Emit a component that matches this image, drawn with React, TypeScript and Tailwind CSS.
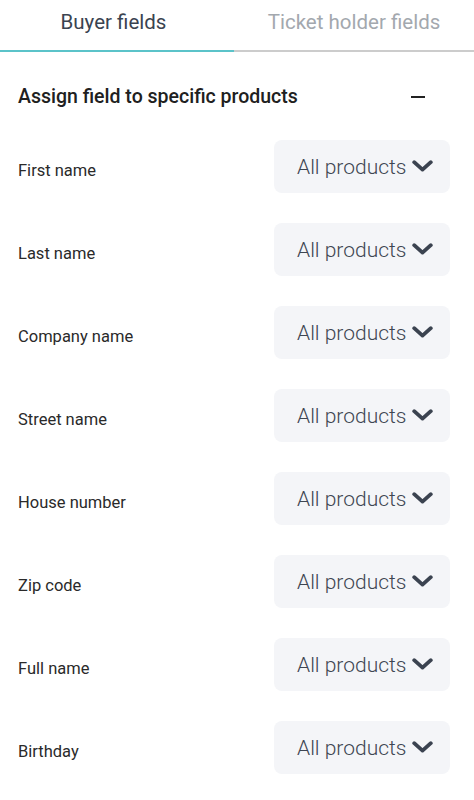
import React from "react";

const fields = [
  "First name",
  "Last name",
  "Company name",
  "Street name",
  "House number",
  "Zip code",
  "Full name",
  "Birthday",
];

function Chevron() {
  return (
    <svg width="21" height="12" viewBox="0 0 21 12" className="ml-[6px] shrink-0 self-start mt-[7px]">
      <polyline
        points="2.2,2.2 10.5,9.6 18.8,2.2"
        fill="none"
        stroke="#3b4350"
        strokeWidth="3.8"
        strokeLinecap="round"
        strokeLinejoin="round"
      />
    </svg>
  );
}

export default function App() {
  return (
    <div className="w-[474px] min-h-[800px] bg-white font-['Roboto',sans-serif]">
      <div className="flex">
        <div className="w-[234px] h-[52px] border-b-2 border-[#5bc3c9] flex justify-center">
          <span className="text-[20.5px] leading-[44px] text-[#3a4350] pr-[7px]">Buyer fields</span>
        </div>
        <div className="w-[240px] h-[52px] border-b-2 border-[#cccccc] flex justify-center">
          <span className="text-[20.5px] leading-[44px] text-[#a3a8ae]">Ticket holder fields</span>
        </div>
      </div>
      <div className="flex items-center justify-between pl-[18px] pr-[49px] mt-[33px]">
        <span className="text-[19.5px] leading-[24px] font-medium text-[#202020]">
          Assign field to specific products
        </span>
        <span className="block w-[14px] h-[2px] bg-[#222222]" />
      </div>
      <div className="flex flex-col gap-[30px] mt-[31px] pl-[18px] pr-[24px]">
        {fields.map((f) => (
          <div key={f} className="flex items-center justify-between">
            <span className="text-[16.5px] leading-[20px] text-[#2a2a2a] mt-[8px]">{f}</span>
            <div className="w-[176px] h-[53px] rounded-[8px] bg-[#f4f5f8] flex items-start pl-[23px] pt-[13px]">
              <span className="text-[21px] leading-[28px] font-light text-[#3e4652]">All products</span>
              <Chevron />
            </div>
          </div>
        ))}
      </div>
    </div>
  );
}
